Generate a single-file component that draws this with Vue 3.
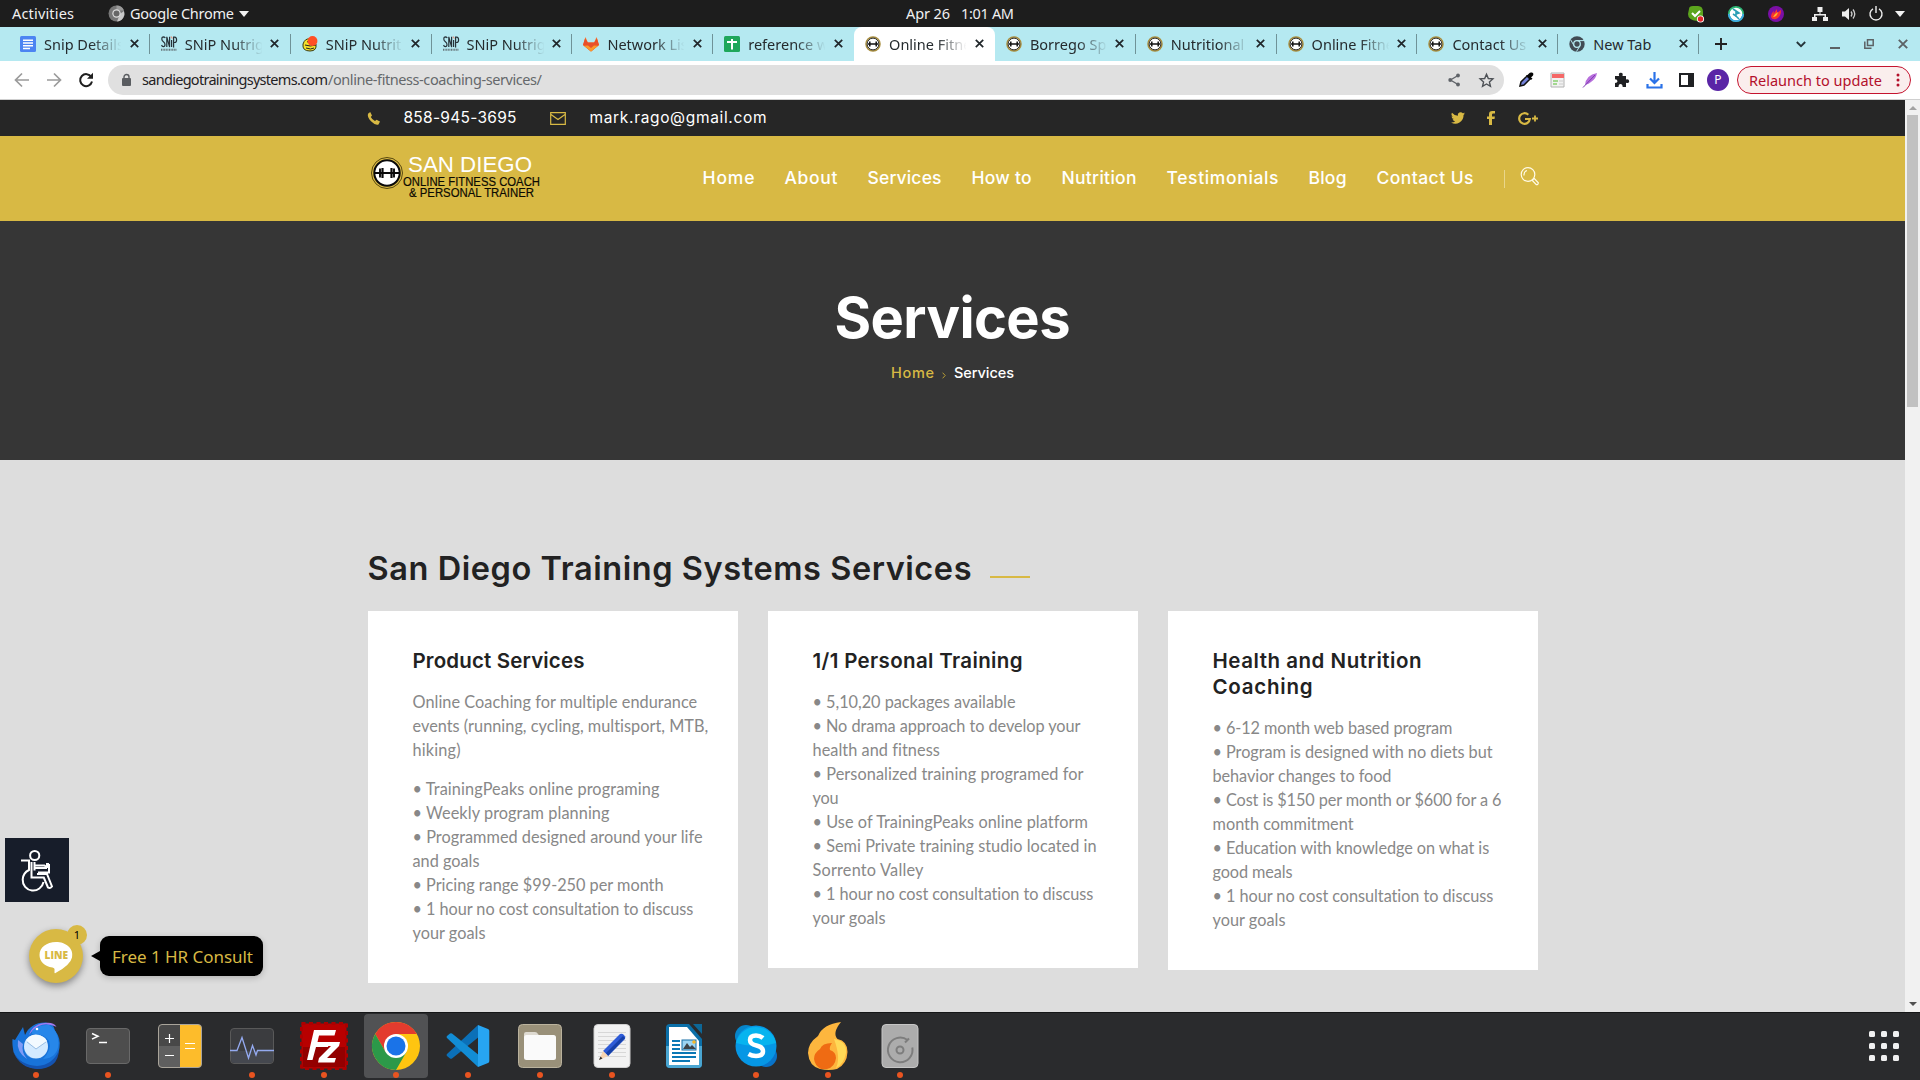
<script setup>
// Spreads the letters of a label so that it fills the given width in pixels.
const vFit = {
  mounted(el, { value }) {
    const count = el.textContent.length
    const spacing = (value - el.getBoundingClientRect().width) / Math.max(count - 1, 1)
    el.style.letterSpacing = spacing + 'px'
    el.style.marginRight = -spacing + 'px'
  },
}

const tabs = [
  { title: 'Snip Details', icon: 'docs' },
  { title: 'SNiP Nutrige', icon: 'snip' },
  { title: 'SNiP Nutrit', icon: 'bee' },
  { title: 'SNiP Nutrige', icon: 'snip' },
  { title: 'Network List', icon: 'gitlab' },
  { title: 'reference we', icon: 'sheets' },
  { title: 'Online Fitne', icon: 'gym', active: true },
  { title: 'Borrego Spr', icon: 'gym' },
  { title: 'Nutritional C', icon: 'gym' },
  { title: 'Online Fitne', icon: 'gym' },
  { title: 'Contact Us', icon: 'gym' },
  { title: 'New Tab', icon: 'chrome' },
]

const nav = [
  ['Home', 52], ['About', 53], ['Services', 74], ['How to', 60],
  ['Nutrition', 75], ['Testimonials', 112], ['Blog', 38], ['Contact Us', 97],
]

const cards = [
  {
    title: [['Product Services', 172]],
    blocks: [
      [['Online Coaching for multiple endurance', 285], ['events (running, cycling, multisport, MTB,', 296], ['hiking)', 48]],
      [['• TrainingPeaks online programing', 247], ['• Weekly program planning', 197], ['• Programmed designed around your life', 290], ['and goals', 67], ['• Pricing range $99-250 per month', 251], ['• 1 hour no cost consultation to discuss', 281], ['your goals', 73]],
    ],
  },
  {
    title: [['1/1 Personal Training', 210]],
    blocks: [
      [['• 5,10,20 packages available', 203], ['• No drama approach to develop your', 268], ['health and fitness', 127], ['• Personalized training programed for', 271], ['you', 26], ['• Use of TrainingPeaks online platform', 275], ['• Semi Private training studio located in', 284], ['Sorrento Valley', 111], ['• 1 hour no cost consultation to discuss', 281], ['your goals', 73]],
    ],
  },
  {
    title: [['Health and Nutrition', 209], ['Coaching', 100]],
    blocks: [
      [['• 6-12 month web based program', 240], ['• Program is designed with no diets but', 280], ['behavior changes to food', 179], ['• Cost is $150 per month or $600 for a 6', 289], ['month commitment', 141], ['• Education with knowledge on what is', 277], ['good meals', 80], ['• 1 hour no cost consultation to discuss', 281], ['your goals', 73]],
    ],
  },
]

const dock = [
  { name: 'thunderbird', running: true },
  { name: 'terminal', running: true },
  { name: 'calculator' },
  { name: 'monitor', running: true },
  { name: 'filezilla', running: true },
  { name: 'chrome', running: true, focused: true },
  { name: 'code', running: true },
  { name: 'files', running: true },
  { name: 'editor', running: true },
  { name: 'writer' },
  { name: 'skype', running: true },
  { name: 'flame', running: true },
  { name: 'disk', running: true },
]
</script>

<template>
  <div class="desktop">
    <header class="topbar">
      <div class="top-left">
        <span v-fit="62" class="t">Activities</span>
        <span class="app-menu">
          <svg width="17" height="17" viewBox="0 0 17 17"><circle cx="8.500" cy="8.500" r="8" fill="#777" /><path d="M8.500.5a8 8 0 0 1 7.500 5H8.500z" fill="#9a9a9a" /><path d="M16 6a8 8 0 0 1-7 10.500L12 9z" fill="#c8c8c8" /><circle cx="8.500" cy="8.500" r="4.200" fill="#ddd" /><circle cx="8.500" cy="8.500" r="3" fill="#666" /></svg>
          <span v-fit="104" class="t">Google Chrome</span>
          <svg width="10" height="6" viewBox="0 0 10 6"><path d="M0 0h10L5 6z" fill="#f2f2f2" /></svg>
        </span>
      </div>
      <div class="clock"><span v-fit="44" class="t">Apr 26</span><span v-fit="53" class="t">1:01 AM</span></div>
      <div class="tray">
        <svg class="tray-app" width="18" height="18" viewBox="0 0 18 18"><path d="M2 4Q2 1 6 1h5q5 0 5 6v5q0 5-6 4Q1 15 1 9z" fill="#5ca51d" /><path d="m5 8 3 3 5-5" stroke="#fff" stroke-width="2" fill="none" /><circle cx="13.500" cy="14" r="3.600" fill="#fff" /><circle cx="13.500" cy="14" r="2.700" fill="#e3242b" /></svg>
        <svg class="tray-app" width="18" height="18" viewBox="0 0 18 18"><circle cx="9" cy="9" r="7.200" fill="#fff" stroke="#2bb673" stroke-width="1.800" /><path d="M1.800 9a7.200 7.200 0 0 0 14.400 0" fill="none" stroke="#3fa9e8" stroke-width="1.800" /><path d="M6 4l3 2 3 2-3 1M9 6v6M6 9l3 2 3 3" fill="none" stroke="#2a9fb5" stroke-width="1.600" /></svg>
        <svg class="tray-app" width="18" height="18" viewBox="0 0 18 18"><circle cx="9" cy="9" r="8" fill="#7b0fa6" /><path d="M4 12q0-4 3-6l-.5 3L10 4v4l4-3q0 7-5 9-4 1-5-2" fill="#f9342f" /><path d="M6 12q1-3 5-5-1 5-5 5" fill="#ffb52b" /></svg>
        <svg class="net" width="16" height="16" viewBox="0 0 16 16" fill="#eee"><path d="M5.500 1h5v5h-2v2H14v3h2v4h-5v-4h1.500V9.500h-9V11H5v4H0v-4h2V8h5.500V6h-2z" /></svg>
        <svg class="vol" width="16" height="16" viewBox="0 0 16 16"><path d="M1 5.500h3L8 2v12l-4-3.500H1z" fill="#eee" /><path d="M10 5.500q2 2.500 0 5M12 3.500q3.500 4.500 0 9" fill="none" stroke="#ccc" stroke-width="1.300" /></svg>
        <svg class="pow" width="14" height="15" viewBox="0 0 14 15"><path d="M4 2.800a6 6 0 1 0 6 0M7 0v7" fill="none" stroke="#eee" stroke-width="1.400" /></svg>
        <svg width="10" height="6" viewBox="0 0 10 6"><path d="M0 0h10L5 6z" fill="#f2f2f2" /></svg>
      </div>
    </header>

    <div class="tabstrip">
      <div v-for="(tab, i) in tabs" :key="i" class="tab" :class="{ active: tab.active, plain: i === 5 }">
        <svg class="favicon" width="16" height="16" viewBox="0 0 16 16">
          <g v-if="tab.icon === 'docs'"><rect width="16" height="16" rx="1.500" fill="#4c84f2" /><path d="M3 4.200h10M3 7h10M3 9.800h10M3 12.400h7" stroke="#fff" stroke-width="1.500" /></g>
          <g v-else-if="tab.icon === 'snip'"><path d="M4.300 2Q3.500.8 2.200.8.7 1 .8 3q0 1.500 1.600 2.700T4 8.500q0 2.200-1.700 2.200Q1 10.700.6 9M5.800 11V.8L8.600 11V.8M10.600 4v7M12.600 11.500V1.200h1q2 .2 2 2.700t-2 2.600h-1" fill="none" stroke="#27333a" stroke-width="1.200" /><path d="M10 .5l1.400 2" stroke="#e98f78" stroke-width="1.200" /><path d="M0 13.800h16" stroke="#66757b" stroke-width="2" stroke-dasharray="1 .6" /></g>
          <g v-else-if="tab.icon === 'bee'"><path d="M1 8q2-6 7-5l6 5q1 7-6 7-8 0-7-7" fill="#f4e12a" stroke="#3a3a10" /><path d="M3 9q5 2 11 0M4 12q5 2 8 0M5 6q1-1 3 0" stroke="#222" fill="none" /><circle cx="10.500" cy="5" r="4.900" fill="#ff4f24" /></g>
          <g v-else-if="tab.icon === 'gitlab'"><path d="M8 15.500 0 9 2.500 1l2.300 5.500h6.400L13.500 1 16 9z" fill="#fc6d26" /><path d="M8 15.500 0 9 2 2.500l2.800 4h6.400l2.800-4L16 9z" fill="#e8502a" /><path d="M8 15.500 1 9.800l4-.3L8 12l3-2.500 4 .3z" fill="#fb9a2b" /></g>
          <g v-else-if="tab.icon === 'sheets'"><rect width="16" height="16" rx="1.500" fill="#1fa75b" /><path d="M3 6h10M8 3v10.500" stroke="#fff" stroke-width="2" /></g>
          <g v-else-if="tab.icon === 'gym'"><circle cx="8" cy="8" r="7" fill="#fff" stroke="#a88d3c" stroke-width="1.500" /><circle cx="8" cy="8" r="5.900" fill="none" stroke="#222" /><path d="M3 8h10M4.800 5.500v5M11.200 5.500v5" stroke="#111" stroke-width="1.500" /></g>
          <g v-else><circle cx="8" cy="8" r="7.700" fill="#414b54" /><circle cx="8" cy="8" r="3.300" fill="#414b54" stroke="#b5e9f1" stroke-width="1.300" /><path d="M8 4.600h7M5 9.700 1.800 4M11 9.700 7.500 15.500" stroke="#b5e9f1" stroke-width="1" /></g>
        </svg>
        <span class="tab-title" :class="{ faded: tab.icon !== 'chrome' }">{{ tab.title }}</span>
        <svg class="x" width="9" height="9" viewBox="0 0 9 9"><path d="m.8.8 7.400 7.400M8.200.8.8 8.200" stroke="#20262a" stroke-width="1.700" /></svg>
      </div>
      <svg class="plus" width="12" height="12" viewBox="0 0 12 12"><path d="M6 0v12M0 6h12" stroke="#222" stroke-width="1.900" /></svg>
      <div class="win">
        <svg width="10" height="7" viewBox="0 0 10 7"><path d="m.8 1 4.200 4.200L9.200 1" fill="none" stroke="#26343a" stroke-width="1.800" /></svg>
        <svg width="10" height="10" viewBox="0 0 10 10"><path d="M0 9h10" stroke="#5c6265" stroke-width="2" /></svg>
        <svg width="10" height="10" viewBox="0 0 10 10"><path d="M3.500.8h5.700v5.700H3.500zM.8 2.500v6.700H7.500" fill="none" stroke="#5c6265" stroke-width="1.500" /></svg>
        <svg width="10" height="10" viewBox="0 0 10 10"><path d="m.8.8 8.400 8.400M9.200.8.8 9.200" stroke="#5c6265" stroke-width="1.900" /></svg>
      </div>
    </div>

    <div class="toolbar">
      <svg class="nav-ic" width="16" height="16" viewBox="0 0 16 16"><path d="M15 8H2M8 1.500 1.500 8 8 14.500" fill="none" stroke="#9b9b9b" stroke-width="1.700" /></svg>
      <svg class="nav-ic" width="16" height="16" viewBox="0 0 16 16"><path d="M1 8h13M8 1.500 14.500 8 8 14.500" fill="none" stroke="#9b9b9b" stroke-width="1.700" /></svg>
      <svg class="nav-ic" width="16" height="16" viewBox="0 0 16 16"><path d="M13.300 5A6 6 0 1 0 14 9.500" fill="none" stroke="#1f1f1f" stroke-width="2" /><path d="M15 .8v6H9z" fill="#1f1f1f" /></svg>
      <div class="omnibox">
        <svg width="9" height="12" viewBox="0 0 9 12"><rect y="4" width="9" height="8" rx="1" fill="#5a5d61" /><path d="M2 5V3a2.500 2.500 0 0 1 5 0v2" fill="none" stroke="#5a5d61" stroke-width="1.400" /></svg>
        <span class="url"><span v-fit="186" class="t host">sandiegotrainingsystems.com</span><span v-fit="214" class="t path">/online-fitness-coaching-services/</span></span>
        <svg class="share" width="12" height="14" viewBox="0 0 12 14"><path d="M10 2.500 2.500 7 10 11.500" fill="none" stroke="#5f6368" stroke-width="1.400" /><circle cx="10" cy="2.500" r="1.900" fill="#5f6368" /><circle cx="2.200" cy="7" r="1.900" fill="#5f6368" /><circle cx="10" cy="11.500" r="1.900" fill="#5f6368" /></svg>
        <svg width="15" height="14" viewBox="0 0 24 23"><path d="m12 2 3 7 7.500.7-5.700 5 1.700 7.300L12 18l-6.500 4 1.700-7.300-5.700-5L9 9z" fill="none" stroke="#4d5156" stroke-width="2.300" /></svg>
      </div>
      <div class="ext">
        <svg width="16" height="16" viewBox="0 0 16 16"><path d="m2 14 1-4 6-6 3 3-6 6z" fill="#7482d9" stroke="#111" stroke-width="1.500" /><path d="m8 3 5 5 1.500-1.500-1.500-1 2-2Q16 1 14 .5t-3 1L9.500 3z" fill="#050505" /></svg>
        <svg width="16" height="16" viewBox="0 0 16 16"><path d="M1 1h13v14H1z" fill="#f2f2f2" stroke="#b2b2b2" /><path d="M2 2h12v4H2z" fill="#f56867" /><path d="M3 9h5M3 12h4" stroke="#8bcf72" stroke-width="1.500" /><path d="M9 9h4M9 12h4" stroke="#ccc" /></svg>
        <svg width="16" height="16" viewBox="0 0 16 16"><path d="M3 13Q4 3 15 1q-1 6-6 9-2 2-6 3" fill="#b76fdc" /><path d="M1 15.500 13 3" stroke="#7e3cb1" /></svg>
        <svg width="16" height="16" viewBox="0 0 16 16"><path d="M1 4h4.200Q4 1 6.700.8T8.500 4H12v3.500q3-.8 3.200 1.700T12 10.700V15H8.700Q8.500 12 6.500 12t-2 3H1v-4q2.500 0 2.500-1.800T1 7.300z" fill="#1f2023" /></svg>
        <svg width="17" height="17" viewBox="0 0 17 17"><path d="M8.500 0v10M4 6.500 8.500 11 13 6.500M1.500 12v3.500h14V12" fill="none" stroke="#2a72e8" stroke-width="2.200" /></svg>
        <svg width="15" height="14" viewBox="0 0 15 14"><path d="M1 1h13v12H1z" fill="#fff" stroke="#202124" stroke-width="2" /><path d="M9 1h5v12H9z" fill="#202124" /></svg>
      </div>
      <span class="avatar">P</span>
      <div class="relaunch"><span v-fit="133" class="t">Relaunch to update</span><svg width="4" height="14" viewBox="0 0 4 14" fill="#b3102b"><circle cx="2" cy="2" r="1.500" /><circle cx="2" cy="7" r="1.500" /><circle cx="2" cy="12" r="1.500" /></svg></div>
    </div>

    <div class="viewport">
      <div class="page">
        <div class="contact">
          <div class="wrap">
            <svg class="call" width="13" height="13" viewBox="0 0 13 13"><path d="M1 1.700 3.200 0 5 3.500 3.800 4.900Q5 7.500 8 9l1.500-1.200L13 9.500 11.500 12.400Q8 13.500 4 9.300T1 1.700" fill="#d8b944" /></svg>
            <span v-fit="113" class="t phone">858-945-3695</span>
            <svg class="mail" width="16" height="13" viewBox="0 0 16 13"><path d="M.7.700h14.600v11.600H.7zM1 2.500l7 5 7-5" fill="none" stroke="#d8b944" stroke-width="1.200" /></svg>
            <span v-fit="177" class="t">mark.rago@gmail.com</span>
            <div class="social">
              <svg width="14" height="12" viewBox="0 0 24 20"><path d="M24 2.400a10 10 0 0 1-2.800.8A5 5 0 0 0 23.300.5a10 10 0 0 1-3.100 1.200 4.900 4.900 0 0 0-8.400 4.500A14 14 0 0 1 1.700 1a4.900 4.900 0 0 0 1.500 6.600A5 5 0 0 1 1 7a4.900 4.900 0 0 0 3.900 4.900 5 5 0 0 1-2.200.1 4.900 4.900 0 0 0 4.600 3.400A10 10 0 0 1 0 17.500 14 14 0 0 0 21.500 5z" fill="#d8b944" /></svg>
              <svg width="8" height="14" viewBox="0 0 8 14"><path d="M2 14V8H0V5.500h2V3.300Q2 0 5.300 0H8v2.400H6.200Q5 2.400 5 3.500v2h2.900L7.500 8H5v6z" fill="#d8b944" /></svg>
              <svg width="20" height="13" viewBox="0 0 20 13"><path d="M10.300 2.800a5.300 5.300 0 1 0 1.500 4.200H7" fill="none" stroke="#d8b944" stroke-width="2.200" /><path d="M14 6.500h6M17 3.500v6" stroke="#d8b944" stroke-width="1.800" /></svg>
            </div>
          </div>
        </div>

        <div class="menu">
          <div class="wrap">
            <svg class="logo" width="175" height="48" viewBox="0 0 175 48" font-family="Liberation Sans, Arial, sans-serif">
              <circle cx="19" cy="21" r="15.500" fill="none" stroke="#5a4a10" />
              <circle cx="19" cy="21" r="12.700" fill="#fff" stroke="#0a0a0a" stroke-width="2" />
              <path d="M7 21h24M12 16.500v9M26 16.500v9" stroke="#0a0a0a" stroke-width="1.900" /><path d="M14.500 16v10M23.500 16v10" stroke="#0a0a0a" stroke-width="2.200" />
              <text x="40" y="20" font-size="22" fill="#fff" textLength="124" lengthAdjust="spacingAndGlyphs">SAN DIEGO</text>
              <text x="35" y="34" font-size="12.500" fill="#0c0a02" stroke="#0c0a02" stroke-width=".2" textLength="137" lengthAdjust="spacingAndGlyphs">ONLINE FITNESS COACH</text>
              <text x="41" y="44.700" font-size="12.500" fill="#0c0a02" stroke="#0c0a02" stroke-width=".2" textLength="125" lengthAdjust="spacingAndGlyphs">&amp; PERSONAL TRAINER</text>
            </svg>
            <nav>
              <a v-for="[label, w] in nav" :key="label" :style="{ width: w + 'px' }"><span v-fit="w" class="t">{{ label }}</span></a>
            </nav>
            <i class="rule"></i>
            <svg class="search" width="19" height="19" viewBox="0 0 19 19" fill="none" stroke="#fffbe8" stroke-width="1.200"><circle cx="8" cy="7.500" r="6.800" /><path d="M4 8.500Q3.700 4.500 7 3.500M12.800 12.500l1.500-1 4 4.300q0 2-2 1.900l-3.700-4z" /></svg>
          </div>
        </div>

        <div class="hero">
          <h1><span v-fit="236" class="t">Services</span></h1>
          <div class="crumbs">
            <span v-fit="43" class="t gold">Home</span>
            <svg width="4" height="7" viewBox="0 0 4 7"><path d="m.6.700 2.600 2.800L.6 6.300" fill="none" stroke="#b99e35" stroke-width="1" /></svg>
            <span v-fit="60" class="t">Services</span>
          </div>
        </div>

        <main>
          <div class="heading"><h2><span v-fit="604" class="t">San Diego Training Systems Services</span></h2><i></i></div>
          <div class="cards">
            <section v-for="(card, i) in cards" :key="i" class="card">
              <h3><div v-for="[line, w] in card.title" :key="line"><span v-fit="w" class="t">{{ line }}</span></div></h3>
              <div v-for="(block, b) in card.blocks" :key="b" class="block">
                <div v-for="[line, w] in block" :key="line"><span v-fit="w" class="t">{{ line }}</span></div>
              </div>
            </section>
          </div>
        </main>
      </div>
      <div class="scrollbar">
        <svg width="8" height="4" viewBox="0 0 8 4"><path d="M0 4h8L4 0z" fill="#a3a3a3" /></svg>
        <i></i>
        <svg class="down" width="8" height="4" viewBox="0 0 8 4"><path d="M0 0h8L4 4z" fill="#505050" /></svg>
      </div>
    </div>

    <div class="access">
      <svg width="32" height="41" viewBox="0 0 32 41" fill="none" stroke="#fff" stroke-width="2"><circle cx="13.700" cy="5.500" r="4.600" /><path d="M0 10.500h8v9.500Q2 23 1.700 29.500A10.500 10.500 0 0 0 22.500 32M10.500 12v15.500h12.300l4.200 10q2 1.500 4-1L26 24H16M13.500 12v8.500M28 14v8.500H17M28 14h-2v4M14 15.500h9.500q1.500.5 1.500 2.500H14.500" /></svg>
    </div>
    <div class="line-btn">
      <svg width="34" height="32" viewBox="0 0 34 32"><path d="M17 0C7.500 0 .5 5.500.5 13c0 6.500 5 11.500 13 12.600q2.500.5 2 3v2.200q0 .8 1 .3Q31.500 23 33 15.500C35 6 26.500 0 17 0" fill="#fff" /><text x="5.500" y="17" font-size="10.500" font-weight="800" font-family="Open Sans" textLength="23.500" lengthAdjust="spacingAndGlyphs" fill="#d8b944">LINE</text></svg>
      <span class="badge">1</span>
    </div>
    <div class="tip"><span v-fit="141" class="t">Free 1 HR Consult</span></div>

    <footer class="dock">
      <div v-for="item in dock" :key="item.name" class="slot">
        <div class="tile" :class="{ focused: item.focused }">
          <svg width="48" height="48" viewBox="0 0 48 48">
            <g v-if="item.name === 'thunderbird'">
              <path d="M3 18 11 5l2 8Q19 0 34 .5q8 1 9 8 6 8 4.500 17Q45 44 28 46.500 9 47 1.500 30 0 22 .5 17z" fill="#1873d9" />
              <path d="M17 13Q21 1 36 .8q6 0 8.500 4Q34 0 27 4q-6 3-10 9" fill="#a17af0" />
              <path d="M20 9q6-7 17-6 9 5 9.500 18Q46 36 31 37q9-9 6-18-5-8-17-7z" fill="#2787ea" />
              <path d="M1.500 30Q8 43 25 44q16-1 22-16-1 19-22 19Q8 46 1.500 30" fill="#1453b0" />
              <path d="M6 18q-2 12 9 19-6-7-4-15" fill="#7f9cf6" />
              <circle cx="24" cy="24.500" r="12" fill="#d3eaff" /><path d="m14 18 10 9 11-8-2-3q-9-6-16-1z" fill="#f3faff" /><path d="m15 20 9 7 10-7" fill="none" stroke="#9bbfe4" /><path d="M13 31q7 8 18 5-12 3-18-5" fill="#98ccff" /><circle cx="25" cy="7" r="1.300" fill="#fff" />
            </g>
            <g v-else-if="item.name === 'terminal'"><rect x="2.500" y="6.500" width="43" height="35" rx="3.500" fill="#4d4d4d" stroke="#696969" /><path d="m8 11.500 6 2.800-6 2.800M15 20.500h8" fill="none" stroke="#fff" stroke-width="1.500" /></g>
            <g v-else-if="item.name === 'calculator'"><path d="M24 2.500H6q-3.500 0-3.500 3.500v18H24z" fill="#484848" /><path d="M2.500 24v18q0 3.500 3.500 3.500h18V24z" fill="#5f5f5f" /><path d="M24 2.500h18q3.500 0 3.500 3.500v36q0 3.500-3.500 3.500H24z" fill="#fdbc2b" /><rect x="2.500" y="2.500" width="43" height="43" rx="3.500" fill="none" stroke="#a9a49a" /><path d="M9 16.500h9M13.500 12v9M9 33.500h9M29 21.500h10M29 26.500h10" stroke="#fff" stroke-width="1.200" /></g>
            <g v-else-if="item.name === 'monitor'"><rect x="2.500" y="6.500" width="43" height="35" rx="3.500" fill="#3b3c3f" stroke="#595959" /><path d="M3 29h42v8q0 4-4 4H7q-4 0-4-4z" fill="#45484f" /><path d="M2 28.500h7l5-13 6.500 20.500 4-12.500 3.500 9.500 1.500-4.500H46" fill="none" stroke="#94aaf0" stroke-width="1.300" /></g>
            <g v-else-if="item.name === 'filezilla'"><rect x="1.500" y="1.500" width="45" height="45" fill="#b80000" stroke="#ad0000" stroke-width="3" stroke-dasharray="4 3.500" /><path d="M3 25h42v20H3z" fill="#930000" /><path d="M14 8h22l-1.500 5.500H19l-1.500 6.500h12L28 25H16l-3.500 13H7zM24 20h16l-1 4-12 12h9l-1.500 4.500H18l1-4.500 12-12h-8z" fill="#fff" /></g>
            <g v-else-if="item.name === 'chrome'"><circle cx="24" cy="24" r="24" fill="#ffc510" /><path d="M3.200 12A24 24 0 0 1 44.800 12H24L13.600 30z" fill="#e33b2e" /><path d="M3.200 12A24 24 0 0 0 24 48l10.400-18-20.800 0z" fill="#2c9949" /><circle cx="24" cy="24" r="12" fill="#fff" /><circle cx="24" cy="24" r="9.500" fill="#1a73e8" /></g>
            <g v-else-if="item.name === 'code'"><path d="m34 3-31 29q-1 1 0 2l3 2.500q1 .7 2 0L36 14z" fill="#0b70b8" /><path d="m34 45-31-29q-1-1 0-2l3-2.500q1-.7 2 0L36 34z" fill="#128dd5" /><path d="m34 3 10 4q1.300.7 1.300 2v30q0 1.300-1.300 2l-10 4z" fill="#27a5f2" /></g>
            <g v-else-if="item.name === 'files'"><rect x="2.500" y="2.500" width="43" height="43" rx="4" fill="#999079" stroke="#bab29d" /><path d="M8 17v-5q0-2 2-2h9q2 0 3 2l1.500 2H38v8z" fill="#dedad1" /><rect x="8" y="13" width="32" height="25" rx="2.500" fill="#fafafa" /></g>
            <g v-else-if="item.name === 'editor'"><rect x="6" y="2.500" width="36" height="43" rx="4" fill="#f2f2f2" stroke="#cfcfcf" /><path d="M10 10.500h28M10 14.500h28M10 18.500h28M10 22.500h28M10 26.500h28M10 30.500h28M10 34.500h28" stroke="#cfcfcf" stroke-width=".8" /><path d="m15 29 17-17q2-1 4 1t1 4L20 34z" fill="#2e5bd7" /><path d="m18 31 17-17 2 2-17 18z" fill="#1640a7" /><path d="m15 29 5 5-9 4z" fill="#f8d5b2" /><path d="m12.500 34.500 2 2-3.500 1.500z" fill="#333" /></g>
            <g v-else-if="item.name === 'writer'"><path d="M10 2h19l13 15v25q0 4-4 4H10q-4 0-4-4V6q0-4 4-4" fill="#0b6fa8" /><path d="M6 24h36v18q0 4-4 4H10q-4 0-4-4z" fill="#4aa6d2" /><path d="M9 5h18l12 14v24H9z" fill="#fff" /><path d="m33 2h9v10z" fill="#0d6797" /><path d="M12 19h8M12 23h8M12 27h8M12 31h24M12 35h24M12 39h18" stroke="#0b78b5" stroke-width="2" /><rect x="22" y="18" width="14" height="10" fill="#9cd4f2" stroke="#176fa5" /><path d="m23 27 4-6 3 4 2-2 4 4z" fill="#3d4247" /><circle cx="34" cy="20" r="1.800" fill="#f6b726" /></g>
            <g v-else-if="item.name === 'skype'"><circle cx="14" cy="14" r="11" fill="#0785ca" /><circle cx="34" cy="34" r="11" fill="#0873c9" /><circle cx="24" cy="24" r="20.500" fill="#0697e5" /><path d="M4 21a20.500 20.500 0 0 1 40 0Q24 27 4 21" fill="#07b4ef" /><path d="M31 16q-3-2.500-7-2.500-6 0-6 4.500 0 4 6.500 5.500t6.500 5.800q0 4.700-7 4.700-4 0-7.500-2" fill="none" stroke="#fff" stroke-width="4.500" /></g>
            <g v-else-if="item.name === 'flame'"><path d="M37 0Q19 2 14 14 4 21 4 31q1 13 12 16 9 2 17 0 10-5 10.500-17 0-11-10-13Q28 11 37 0" fill="#fdb63e" /><path d="M30 17q13 2 12 14-2 11-10 15 5-10-2-29" fill="#ffd957" /><path d="M28 21Q18 21 16 27q-6 4-6 10 1 7 7 10h6q8-2 9-11 0-6-6-8-1-3 2-7" fill="#ef6b13" /></g>
            <g v-else><rect x="6" y="2.500" width="36" height="43" rx="4" fill="#acacac" stroke="#c6c6c6" /><path d="M31.500 18a12.300 12.300 0 1 0 4.800 7.500M29 20.500l4-4" fill="none" stroke="#7d7d7d" stroke-width="2" /><circle cx="24" cy="28" r="3.500" fill="none" stroke="#7d7d7d" stroke-width="2" /></g>
          </svg>
        </div>
        <i v-if="item.running" class="dot"></i>
      </div>
      <div class="grid"><i v-for="n in 9" :key="n"></i></div>
    </footer>
  </div>
</template>

<style>
body { overflow: hidden; background: #ddd; }
</style>

<style scoped>
* { box-sizing: border-box; }
h1, h2, h3 { margin: 0; }
svg { display: block; flex: none; overflow: visible; }
.t { display: inline-block; white-space: pre; }
.desktop { position: relative; width: 1920px; height: 1080px; display: flex; flex-direction: column; font-family: "Noto Sans", "Open Sans", sans-serif; overflow: hidden; }

.topbar { height: 27px; background: #1d1d1d; color: #f0f0f0; font-size: 14.5px; line-height: 27px; display: grid; grid-template-columns: 1fr auto 1fr; align-items: center; padding: 0 15px 0 12px; }
.top-left { display: flex; gap: 34px; }
.app-menu { display: flex; align-items: center; gap: 5px; }
.clock { display: flex; gap: 11px; margin-left: 3px; }
.tray { display: flex; align-items: center; justify-content: flex-end; }
.tray-app { margin-right: 22px; }
.net { margin: 0 13px 0 5px; }
.vol { margin-right: 12px; }
.pow { margin-right: 12px; }

.tabstrip { height: 34px; background: #b5e9f1; display: flex; align-items: center; padding: 0 12px 0 9px; }
.tab { width: 140.850px; height: 34px; display: flex; align-items: center; padding: 0 0 1px 11px; position: relative; flex: none; }
.tab::after { content: ""; position: absolute; right: 0; top: 7px; width: 1px; height: 20px; background: #6f9398; }
.tab.plain::after, .tab.active::after { display: none; }
.tab.active { background: #fff; border-radius: 8px 8px 0 0; }
.tab-title { width: 79px; margin-left: 8px; overflow: hidden; white-space: nowrap; font-size: 14.5px; line-height: 24px; color: #252b2e; }
.tab-title.faded { -webkit-mask-image: linear-gradient(90deg, #000 60%, transparent 98%); mask-image: linear-gradient(90deg, #000 60%, transparent 98%); }
.x { margin-left: 6.500px; }
.plus { margin: 0 0 1px 16px; }
.win { margin-left: auto; display: flex; align-items: center; gap: 24px; }

.toolbar { height: 39px; background: #fff; border-bottom: 1px solid #cfcfcf; display: flex; align-items: center; padding: 0 9px 0 14px; }
.nav-ic { margin-right: 16px; }
.nav-ic:nth-child(3) { margin-right: 14px; }
.omnibox { width: 1396px; height: 30px; border-radius: 15px; background: #e0e0e0; display: flex; align-items: center; padding: 0 10px 0 14px; }
.url { margin: 0 auto 2px 11px; display: flex; font-size: 14.5px; line-height: 28px; }
.host { color: #1f2023; }
.path { color: #65686b; }
.share { margin-right: 19px; }
.ext { display: flex; align-items: center; justify-content: space-between; width: 176px; margin-left: 14px; }
.avatar { width: 22px; height: 22px; border-radius: 50%; background: #5a25a6; color: #fff; font-size: 12px; line-height: 22px; text-align: center; margin: 0 8px 0 13px; }
.relaunch { width: 174px; height: 28px; border: 1px solid #c5142f; border-radius: 14px; background: #faeeed; color: #b3102b; font-size: 14.5px; line-height: 25px; display: flex; align-items: center; justify-content: space-between; padding: 0 10px 0 11px; }

.viewport { height: 912px; display: flex; }
.page { width: 1905px; background: #ddd; font-family: Inter, "Open Sans", sans-serif; }
.wrap { width: 1170px; margin: 0 auto; height: 100%; display: flex; align-items: center; }
.contact { height: 36px; background: #262626; color: #fff; font-size: 15.500px; line-height: 36px; }
.call { margin-left: -1px; }
.phone { margin-left: 24px; }
.mail { margin-left: 33px; margin-right: 24px; }
.social { margin-left: auto; display: flex; align-items: center; gap: 24px; }
.social svg:nth-child(2) { margin: 0 -1px 0 -2px; }
.menu { height: 85px; background: #d8b944; color: #fff; }
.logo { margin-top: -6px; }
nav { display: flex; gap: 30px; margin: -2px 0 0 160px; font-size: 17.500px; font-weight: 500; line-height: 24px; }
.rule { width: 1px; height: 18px; background: #e9d68b; margin-left: 30px; }
.search { margin: -4px -1px 0 auto; }
.hero { height: 239px; background: #363636; color: #fff; display: flex; flex-direction: column; align-items: center; padding-top: 62px; }
h1 { font-size: 56px; line-height: 70px; font-weight: 650; }
.crumbs { display: flex; align-items: center; gap: 8px; margin-top: 8px; font-size: 14.500px; font-weight: 500; line-height: 24px; }
.crumbs svg { margin-top: 4px; }
.gold { color: #d8b944; }
main { width: 1170px; margin: 0 auto; padding-top: 88px; color: #222; }
.heading { height: 63px; display: flex; align-items: flex-start; }
h2 { font-size: 32.500px; line-height: 42px; font-weight: 640; }
.heading i { width: 40px; height: 2px; background: #d8b944; margin: 28px 0 0 18px; }
.cards { display: flex; gap: 30px; align-items: flex-start; }
.card { width: 370px; background: #fff; padding: 37px 0 23px 45px; }
h3 { font-size: 20.500px; line-height: 26px; font-weight: 620; margin-bottom: 16px; }
.block { font-family: Lato, sans-serif; font-size: 16.300px; line-height: 24px; color: #888; margin-bottom: 15px; }
.scrollbar { width: 15px; background: #f1f1f1; display: flex; flex-direction: column; align-items: center; padding: 6px 0; }
.scrollbar i { width: 11px; height: 292px; background: #c1c1c1; margin-top: 5px; }
.down { margin-top: auto; }

.access { position: absolute; left: 5px; top: 838px; width: 64px; height: 64px; background: #171d2a; display: flex; align-items: center; justify-content: center; }
.line-btn { position: absolute; left: 29px; top: 929px; width: 54px; height: 54px; border-radius: 50%; background: #d8b944; box-shadow: 0 3px 7px rgba(0, 0, 0, .4); display: flex; align-items: center; justify-content: center; }
.line-btn svg { margin: 4px 1px 0 0; }
.badge { position: absolute; left: 38px; top: -4px; width: 20px; height: 20px; border-radius: 50%; background: #d8b944; color: #000; font-size: 11px; line-height: 20px; text-align: center; }
.tip { position: absolute; left: 100px; top: 936px; width: 163px; height: 40px; border-radius: 9px; background: #000; color: #d8b944; font-size: 17px; line-height: 41px; padding-left: 12px; box-shadow: 0 2px 6px rgba(0, 0, 0, .2); }
.tip::before { content: ""; position: absolute; left: -9px; top: 15px; border: 5px solid transparent; border-right: 9px solid #000; border-left: 0; }

.dock { height: 68px; background: #2a2b2d; border-top: 1px solid #151617; display: flex; }
.slot { position: relative; width: 72px; display: flex; justify-content: center; padding-top: 1px; }
.tile { width: 64px; height: 64px; border-radius: 4px; display: flex; align-items: center; justify-content: center; }
.focused { background: #515254; }
.dot { position: absolute; left: 33px; top: 59px; width: 6px; height: 6px; border-radius: 50%; background: #e95420; }
.grid { margin: 18px 21px 0 auto; display: grid; grid-template-columns: repeat(3, 6px); grid-auto-rows: 6px; gap: 6px; }
.grid i { background: #f0f0f0; border-radius: 1.500px; }
</style>
